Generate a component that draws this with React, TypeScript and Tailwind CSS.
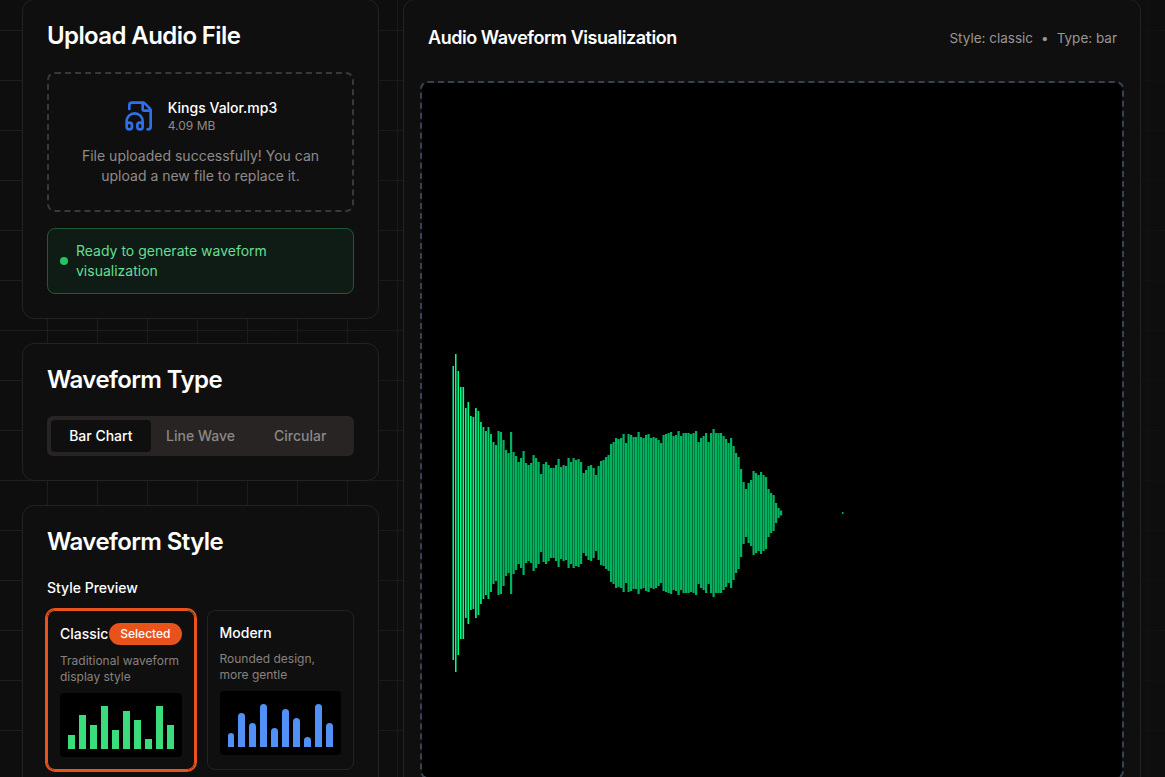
import { FileAudio2 } from 'lucide-react';

const amps = [
  147, 159, 142, 126, 126, 105, 111, 97, 96, 105, 102, 91, 86, 82, 86, 79, 71, 68, 82, 81, 73, 63, 60, 81, 61,
  57, 51, 55, 62, 50, 48, 50, 58, 55, 51, 39, 49, 51, 48, 45, 45, 48, 54, 46, 48, 47, 55, 51, 55, 53, 54, 51,
  40, 43, 47, 48, 45, 38, 47, 52, 53, 56, 58, 69, 71, 75, 74, 75, 79, 70, 79, 78, 76, 76, 81, 76, 75, 78, 79,
  75, 76, 75, 73, 70, 78, 79, 80, 81, 77, 78, 82, 77, 80, 80, 80, 79, 80, 82, 71, 75, 77, 80, 71, 80, 84, 80,
  80, 80, 77, 74, 70, 75, 67, 60, 56, 44, 31, 24, 30, 33, 42, 40, 38, 41, 38, 36, 24, 20, 18, 10, 5, 2.5,
];

const previewBars = [30, 70, 50, 90, 40, 80, 60, 20, 90, 50];

const Waveform = () => (
  <svg width="699" height="694" viewBox="0 0 699 694" className="block">
    {amps.map((amp, i) => (
      <rect
        key={i}
        x={30.5 + i * 2.5}
        y={430 - amp}
        width={Math.min(2.2, 1.5 + i * 0.03)}
        height={amp * 2}
        fill="#00ff88"
        opacity={i < 6 ? 1 : Math.max(0.7, 1.1 - i * 0.02)}
      />
    ))}
    <rect x={420} y={429} width={1.5} height={2} fill="#00ff88" opacity={0.7} />
  </svg>
);

const App = () => {
  return (
    <div className="h-[777px] overflow-hidden bg-[#0e0e0f] bg-[linear-gradient(90deg,#0e0e0f00_0%,#0e0e0fcc_100%),linear-gradient(#1e1e20_1px,transparent_1px),linear-gradient(90deg,#1e1e20_1px,transparent_1px)] bg-[size:100%_100%,50px_50px,50px_50px] bg-[position:0_0,47px_30px,47px_30px] font-['Inter',sans-serif] text-white antialiased">
      <div className="-mt-px flex items-start gap-6 pl-[22px] pr-6">
        <div className="flex w-[357px] shrink-0 flex-col gap-6">
          <section className="rounded-xl border border-[#232224] bg-[#100f10] p-6">
            <h2 className="mb-6 text-2xl leading-none font-semibold tracking-tight">Upload Audio File</h2>
            <div className="rounded-lg border-2 border-dashed border-[#39383b] px-6 py-6 text-center">
              <div className="flex items-center justify-center gap-3">
                <FileAudio2 size={32} className="text-[#2f6fea]" />
                <div className="text-left">
                  <p className="text-sm font-medium">Kings Valor.mp3</p>
                  <p className="text-xs text-[#8f8b89]">4.09 MB</p>
                </div>
              </div>
              <p className="mt-3 text-sm text-[#8f8b89]">
                File uploaded successfully! You can upload a new file to replace it.
              </p>
            </div>
            <div className="mt-4 flex items-center gap-2 rounded-lg border border-[#1c5b35] bg-[#0f1c16] p-3">
              <span className="h-2 w-2 shrink-0 rounded-full bg-[#22c55e]" />
              <p className="text-sm text-[#66de92]">Ready to generate waveform visualization</p>
            </div>
          </section>

          <section className="rounded-xl border border-[#232224] bg-[#100f10] p-6">
            <h2 className="mb-6 text-2xl leading-none font-semibold tracking-tight">Waveform Type</h2>
            <div className="grid grid-cols-3 rounded-md bg-[#272423] p-1">
              <button className="h-8 rounded bg-[#100f0f] text-sm font-medium text-white">Bar Chart</button>
              <button className="h-8 rounded text-sm font-medium text-[#8c8886]">Line Wave</button>
              <button className="h-8 rounded text-sm font-medium text-[#8c8886]">Circular</button>
            </div>
          </section>

          <section className="rounded-xl border border-[#232224] bg-[#100f10] p-6">
            <h2 className="mb-6 text-2xl leading-none font-semibold tracking-tight">Waveform Style</h2>
            <p className="mb-3 text-sm font-medium">Style Preview</p>
            <div className="grid grid-cols-2 gap-3">
              <div className="rounded-lg border border-[#e8531b] p-3 ring-2 ring-[#e8531b]">
                <div className="flex items-center justify-between">
                  <span className="text-sm font-medium">Classic</span>
                  <span className="rounded-full bg-[#e8531b] px-[11px] py-[3px] text-xs font-medium">Selected</span>
                </div>
                <p className="mt-2 text-xs text-[#86827f]">Traditional waveform display style</p>
                <div className="mt-2 flex h-16 items-end gap-1 rounded bg-black p-2">
                  {previewBars.map((h, i) => (
                    <div key={i} className="flex-1 bg-[#3bdc7c]" style={{ height: `${h}%` }} />
                  ))}
                </div>
              </div>
              <div className="rounded-lg border border-[#232224] p-3">
                <span className="block text-sm font-medium">Modern</span>
                <p className="mt-2 text-xs text-[#86827f]">Rounded design, more gentle</p>
                <div className="mt-2 flex h-16 items-end gap-1 rounded bg-black p-2">
                  {previewBars.map((h, i) => (
                    <div key={i} className="flex-1 rounded-t-full bg-[#5190f5]" style={{ height: `${h}%` }} />
                  ))}
                </div>
              </div>
            </div>
          </section>
        </div>

        <section className="min-w-0 flex-1 rounded-xl border border-[#232224] bg-[#100f10]">
          <div className="flex items-center justify-between pt-6 pr-[23px] pb-[13px] pl-6">
            <h2 className="text-lg font-semibold tracking-tight">Audio Waveform Visualization</h2>
            <div className="flex items-center gap-2 text-[13.5px] text-[#9a9693]">
              <span>Style: classic</span>
              <span>•</span>
              <span>Type: bar</span>
            </div>
          </div>
          <div className="p-4">
            <div className="overflow-hidden rounded-lg border-2 border-dashed border-[#374151] bg-black bg-clip-padding">
              <Waveform />
            </div>
          </div>
        </section>
      </div>
    </div>
  );
};

export default App;
